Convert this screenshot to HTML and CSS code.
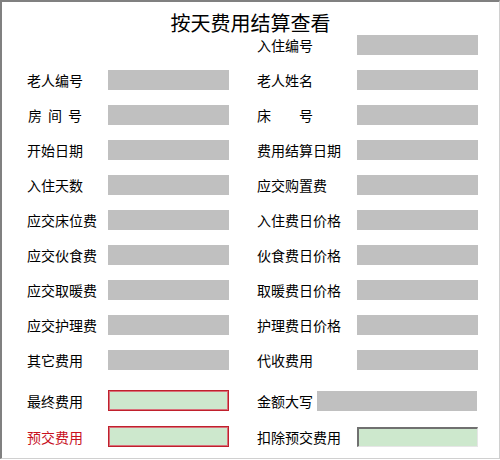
FILE: index.html
```html
<!DOCTYPE html>
<html lang="zh-CN">
<head>
    <meta charset="UTF-8">
    <title>按天费用结算查看</title>
    <link rel="stylesheet" href="styles.css">
</head>
<body>
    <div class="window">
        <h1 class="title">按天费用结算查看</h1>
        <div class="form-grid">
            <span></span><span></span>
            <label class="lbl">入住编号</label><div class="field"></div>

            <label class="lbl">老人编号</label><div class="field"></div>
            <label class="lbl">老人姓名</label><div class="field"></div>

            <label class="lbl spaced">房间号</label><div class="field"></div>
            <label class="lbl justify">床<span>号</span></label><div class="field"></div>

            <label class="lbl">开始日期</label><div class="field"></div>
            <label class="lbl">费用结算日期</label><div class="field"></div>

            <label class="lbl">入住天数</label><div class="field"></div>
            <label class="lbl">应交购置费</label><div class="field"></div>

            <label class="lbl">应交床位费</label><div class="field"></div>
            <label class="lbl">入住费日价格</label><div class="field"></div>

            <label class="lbl">应交伙食费</label><div class="field"></div>
            <label class="lbl">伙食费日价格</label><div class="field"></div>

            <label class="lbl">应交取暖费</label><div class="field"></div>
            <label class="lbl">取暖费日价格</label><div class="field"></div>

            <label class="lbl">应交护理费</label><div class="field"></div>
            <label class="lbl">护理费日价格</label><div class="field"></div>

            <label class="lbl">其它费用</label><div class="field"></div>
            <label class="lbl">代收费用</label><div class="field"></div>

            <label class="lbl total-row">最终费用</label><div class="field total total-row"></div>
            <label class="lbl total-row">金额大写</label><div class="field wide total-row"></div>

            <label class="lbl red">预交费用</label><div class="field total"></div>
            <label class="lbl">扣除预交费用</label><div class="field sunken"></div>
        </div>
    </div>
</body>
</html>
```

FILE: styles.css
```css
body {
    margin: 0;
    background-color: #fff;
    font-family: "Noto Sans CJK SC", "Noto Sans", sans-serif;
}
.window {
    width: 500px;
    height: 459px;
    box-sizing: border-box;
    border-top: 2px solid #808080;
    border-left: 2px solid #808080;
    border-right: 1px solid #d0d0d0;
    border-bottom: 1px solid #d0d0d0;
    background-color: #fff;
}
.title {
    margin: 0 0 1px;
    padding-top: 10px;
    height: 22px;
    font-size: 20px;
    font-weight: normal;
    line-height: 22px;
    text-align: center;
    color: #000;
}
.form-grid {
    display: grid;
    grid-template-columns: 81px 121px 128px 121px;
    grid-template-rows: repeat(10, 20px) auto auto;
    row-gap: 15px;
    padding-left: 25px;
    align-items: center;
}
/* right hand labels sit after the gap between the two columns */
.form-grid > :nth-child(4n+3) {
    padding-left: 28px;
}
.lbl {
    font-size: 14px;
    line-height: 20px;
    color: #000;
    white-space: nowrap;
}
.lbl.spaced {
    letter-spacing: 6px;
    padding-left: 1px;
}
.lbl.justify {
    display: flex;
    justify-content: space-between;
    width: 56px;
}
.lbl.red {
    color: #c8101e;
}
.field {
    height: 20px;
    background-color: #c0c0c0;
}
.field.wide {
    width: 160px;
    justify-self: end;
    margin-right: 1px;
}
.field.total {
    height: 21px;
    box-sizing: border-box;
    background-color: #cde8cd;
    border: 1px solid #c0202c;
    box-shadow: inset 0 0 0 1px #d9707a;
}
.field.sunken {
    box-sizing: border-box;
    background-color: #cde8cd;
    border-top: 2px solid #707070;
    border-left: 2px solid #707070;
    border-right: 1px solid #e6e6e6;
    border-bottom: 1px solid #e6e6e6;
}
.total-row {
    margin-top: 5px;
}
```
